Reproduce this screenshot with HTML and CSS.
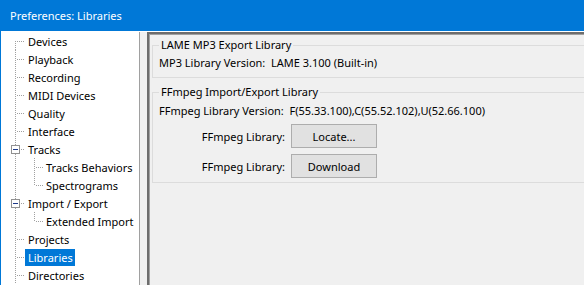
FILE: index.html
```html
<!DOCTYPE html>
<html>
<head>
<meta charset="utf-8">
<link rel="stylesheet" href="styles.css">
</head>
<body>
<div class="window">
  <div class="titlebar">Preferences: Libraries</div>
  <div class="main">
    <div class="tree">
      <div class="row first"><span class="c1"></span><span class="label">Devices</span></div>
      <div class="row"><span class="c1"></span><span class="label">Playback</span></div>
      <div class="row"><span class="c1"></span><span class="label">Recording</span></div>
      <div class="row"><span class="c1"></span><span class="label">MIDI Devices</span></div>
      <div class="row"><span class="c1"></span><span class="label">Quality</span></div>
      <div class="row"><span class="c1"></span><span class="label">Interface</span></div>
      <div class="row"><span class="c1 expander"><span class="box"></span></span><span class="label">Tracks</span></div>
      <div class="row"><span class="pass"></span><span class="c2"></span><span class="label">Tracks Behaviors</span></div>
      <div class="row"><span class="pass"></span><span class="c2 last"></span><span class="label">Spectrograms</span></div>
      <div class="row"><span class="c1 expander"><span class="box"></span></span><span class="label">Import / Export</span></div>
      <div class="row"><span class="pass"></span><span class="c2 last"></span><span class="label">Extended Import</span></div>
      <div class="row"><span class="c1"></span><span class="label">Projects</span></div>
      <div class="row"><span class="c1"></span><span class="label selected">Libraries</span></div>
      <div class="row"><span class="c1"></span><span class="label">Directories</span></div>
    </div>
    <div class="gap"></div>
    <div class="panel">
      <fieldset class="group g1">
        <legend>LAME MP3 Export Library</legend>
        <div class="line">MP3 Library Version:&nbsp; LAME 3.100 (Built-in)</div>
      </fieldset>
      <fieldset class="group g2">
        <legend>FFmpeg Import/Export Library</legend>
        <div class="line">FFmpeg Library Version:&nbsp; F(55.33.100),C(55.52.102),U(52.66.100)</div>
        <div class="buttons">
          <span class="blabel">FFmpeg Library:</span><button class="btn">Locate...</button>
          <span class="blabel">FFmpeg Library:</span><button class="btn">Download</button>
        </div>
      </fieldset>
    </div>
  </div>
</div>
</body>
</html>
```

FILE: styles.css
```css
* { box-sizing: border-box; }
html, body { margin: 0; padding: 0; }
body {
  width: 584px;
  height: 285px;
  overflow: hidden;
  background: #f0f0f0;
  font-family: "Noto Sans", "Open Sans", sans-serif;
  font-size: 11px;
  color: #000;
}
.window {
  width: 584px;
  height: 285px;
  border-left: 1px solid #0078d7;
  display: flex;
  flex-direction: column;
}
.titlebar {
  height: 31px;
  margin-left: -1px;
  background: #0078d7;
  color: #fff;
  font-size: 11px;
  padding-left: 10px;
  line-height: 31px;
  flex: none;
}
.main {
  flex: 1;
  display: flex;
  min-height: 0;
  padding-top: 1px;
  background: #fff;
}
.tree {
  width: 139px;
  flex: none;
  background: #fff;
  border-right: 1px solid #a0a0a0;
  overflow: hidden;
}
.gap {
  width: 7px;
  flex: none;
  background: #f0f0f0;
}
.row {
  height: 18px;
  display: flex;
  align-items: center;
  white-space: nowrap;
}
.c1, .c2, .pass {
  height: 18px;
  flex: none;
  position: relative;
  align-self: stretch;
}
.c1 {
  width: 24px;
  background:
    repeating-linear-gradient(to bottom, #a0a0a0 0 1px, transparent 1px 2px) 14px 0 / 1px 18px no-repeat,
    repeating-linear-gradient(to right, #a0a0a0 0 1px, transparent 1px 2px) 16px 9px / 9px 1px no-repeat;
}
.row.first .c1 {
  background:
    repeating-linear-gradient(to bottom, #a0a0a0 0 1px, transparent 1px 2px) 14px 9px / 1px 9px no-repeat,
    repeating-linear-gradient(to right, #a0a0a0 0 1px, transparent 1px 2px) 16px 9px / 9px 1px no-repeat;
}
.pass {
  width: 19px;
  background:
    repeating-linear-gradient(to bottom, #a0a0a0 0 1px, transparent 1px 2px) 14px 0 / 1px 18px no-repeat;
}
.c2 {
  width: 23px;
  background:
    repeating-linear-gradient(to bottom, #a0a0a0 0 1px, transparent 1px 2px) 14px 0 / 1px 18px no-repeat,
    repeating-linear-gradient(to right, #a0a0a0 0 1px, transparent 1px 2px) 16px 9px / 8px 1px no-repeat;
}
.c2.last {
  background:
    repeating-linear-gradient(to bottom, #a0a0a0 0 1px, transparent 1px 2px) 14px 0 / 1px 10px no-repeat,
    repeating-linear-gradient(to right, #a0a0a0 0 1px, transparent 1px 2px) 16px 9px / 8px 1px no-repeat;
}
.expander { display: flex; }
.box {
  position: absolute;
  left: 10px;
  top: 5px;
  width: 9px;
  height: 9px;
  border: 1px solid #919191;
  background: #fff;
}
.box::after {
  content: "";
  position: absolute;
  left: 1px;
  top: 3px;
  width: 5px;
  height: 1px;
  background: #1e3a8a;
}
.label {
  padding: 0 2px 0 3px;
  line-height: 17px;
  height: 17px;
}
.label.selected {
  background: #0078d7;
  color: #fff;
}
.panel {
  flex: 1;
  background: #f0f0f0;
  border-top: 2px solid #6d6d6d;
  border-left: 2px solid #6d6d6d;
  box-shadow: inset 1px 1px 0 #a0a0a0;
  padding: 3px 0 0 3px;
  min-width: 0;
  overflow: hidden;
}
.group {
  margin: 0;
  border: 1px solid #dcdcdc;
  border-right: none;
  padding: 0 0 0 6px;
  min-width: 0;
}
.group legend {
  padding: 0 2px 0 2px;
  margin-left: 0;
  line-height: 16px;
}
.g1 { height: 41px; }
.g1 .line { margin-top: 2px; }
.g2 { margin-top: 6px; height: 99px; }
.line {
  white-space: nowrap;
  line-height: 16px;
}
.g2 .line { margin-top: 3px; }
.buttons {
  display: grid;
  grid-template-columns: 126px 86px;
  column-gap: 6px;
  row-gap: 6px;
  align-items: center;
  margin-top: 5px;
}
.blabel {
  text-align: right;
  white-space: nowrap;
}
.btn {
  font: inherit;
  height: 24px;
  width: 86px;
  background: #e1e1e1;
  border: 1px solid #adadad;
  padding: 0;
  color: #000;
}
```
